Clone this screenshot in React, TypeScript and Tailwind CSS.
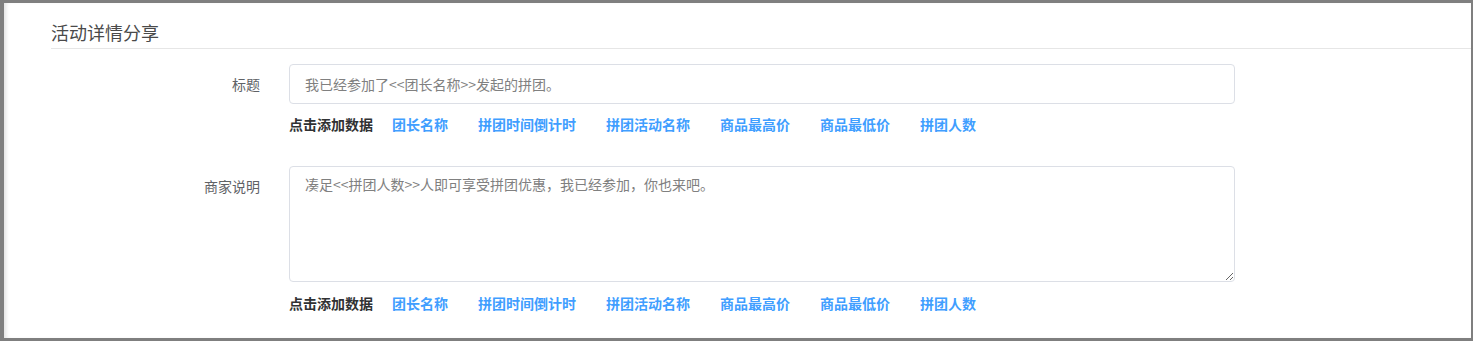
import React from 'react'

const font = { fontFamily: '"Noto Sans CJK SC", "Noto Sans", sans-serif' }

// 可插入的字段
const tags = ['团长名称', '拼团时间倒计时', '拼团活动名称', '商品最高价', '商品最低价', '拼团人数']

function TagRow() {
  return (
    <div className="flex items-center h-[20px] text-[14px] leading-[20px] font-bold">
      <span className="text-[#303133]">点击添加数据</span>
      {tags.map((t, i) => (
        <span key={t} className={`text-[#409eff] cursor-pointer ${i === 0 ? 'ml-[19px]' : 'ml-[30px]'}`}>
          {t}
        </span>
      ))}
    </div>
  )
}

export default function App() {
  return (
    <div className="h-[341px] w-full bg-[#7f7f7f] pt-[3px] pl-[4px] pr-[2px] pb-[3px]" style={font}>
      <div className="h-full bg-white shadow-[inset_4px_0_4px_-2px_rgba(0,0,0,0.12)]">
        {/* 标题 */}
        <div className="ml-[47px] h-[46px] border-b border-[#e6e6e6] flex items-end pb-[4px]">
          <h2 className="text-[18px] leading-[24px] text-[#4a4a4a] font-normal">活动详情分享</h2>
        </div>

        <div className="ml-[47px] pt-[15px]">
          {/* 标题输入 */}
          <div className="flex">
            <label className="w-[209px] text-right text-[14px] text-[#606266] leading-[40px]">标题</label>
            <div className="ml-[29px]">
              <input
                className="w-[946px] h-[40px] border border-[#dcdfe6] rounded-[4px] px-[15px] text-[14px] text-[#808080] outline-none"
                style={font}
                defaultValue="我已经参加了<<团长名称>>发起的拼团。"
              />
              <div className="mt-[10px]">
                <TagRow />
              </div>
            </div>
          </div>

          {/* 商家说明 */}
          <div className="flex mt-[32px]">
            <label className="w-[209px] text-right text-[14px] text-[#606266] leading-[20px] pt-[10px]">商家说明</label>
            <div className="ml-[29px]">
              <textarea
                className="block w-[946px] h-[116px] border border-[#dcdfe6] rounded-[4px] px-[15px] pt-[7px] text-[14px] leading-[20px] text-[#808080] outline-none"
                style={font}
                defaultValue="凑足<<拼团人数>>人即可享受拼团优惠，我已经参加，你也来吧。"
              />
              <div className="mt-[11px]">
                <TagRow />
              </div>
            </div>
          </div>
        </div>
      </div>
    </div>
  )
}
